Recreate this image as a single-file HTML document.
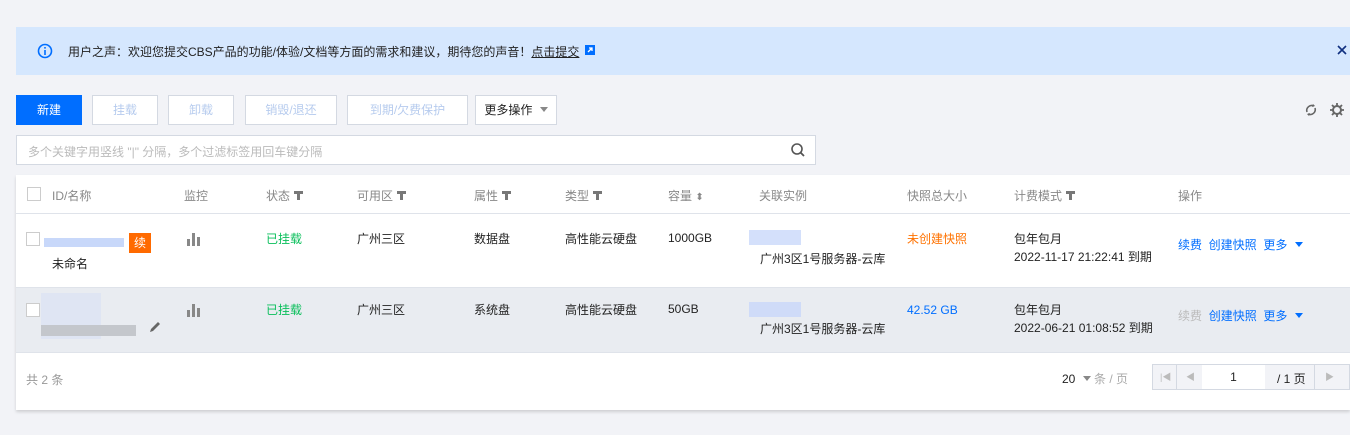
<!DOCTYPE html>
<html><head><meta charset="utf-8"><style>
*{box-sizing:border-box;margin:0;padding:0}
body{width:1350px;height:435px;background:#f2f3f7;font-family:"Liberation Sans","Noto Sans CJK SC",sans-serif;font-size:12px;color:#222;position:relative;overflow:hidden}
.a{position:absolute;white-space:nowrap}
.banner{left:16px;top:27px;width:1334px;height:48px;background:#d5e7fe}
.btn{position:absolute;top:95px;height:30px;border:1px solid #d4d9e2;background:#fff;color:#b6cbee;text-align:center;line-height:28px}
.th{color:#888;top:187px}
.cb{position:absolute;width:14px;height:14px;border:1px solid #ccc;background:#fff}
.g{color:#0abf5b}.b{color:#006eff}
.filt{display:inline-block;width:0;height:0;border-left:4px solid transparent;border-right:4px solid transparent;border-top:5px solid #777;vertical-align:2px;margin-left:4px}
.fun{display:inline-block;width:9px;height:9px;margin-left:4px;vertical-align:0;background:linear-gradient(#777,#777) center/3px 9px no-repeat,linear-gradient(#777,#777) top/9px 3px no-repeat}
.bar{position:absolute;background:#888;width:3px}
</style></head><body>
<div class="a banner"></div>
<svg class="a" style="left:37px;top:43px" width="16" height="16"><circle cx="8" cy="8" r="6.5" fill="none" stroke="#006eff" stroke-width="1.6"/><rect x="7.2" y="7" width="1.6" height="5" fill="#006eff"/><rect x="7.2" y="4" width="1.6" height="1.6" fill="#006eff"/></svg>
<div class="a" style="left:68px;top:43px;color:#222">用户之声：欢迎您提交CBS产品的功能/体验/文档等方面的需求和建议，期待您的声音！<span style="text-decoration:underline">点击提交</span></div>
<svg class="a" style="left:585px;top:45px" width="10" height="10"><rect x="0" y="0" width="10" height="10" fill="#006eff"/><path d="M3 7L7 3M4 3h3v3" stroke="#fff" stroke-width="1.3" fill="none"/></svg>
<svg class="a" style="left:1337px;top:45px" width="10" height="10"><path d="M1 1l8 8M9 1l-8 8" stroke="#103080" stroke-width="1.6"/></svg>
<div class="btn" style="left:16px;width:66px;background:#006eff;border-color:#006eff;color:#fff">新建</div>
<div class="btn" style="left:92px;width:66px">挂载</div>
<div class="btn" style="left:168px;width:66px">卸载</div>
<div class="btn" style="left:245px;width:92px">销毁/退还</div>
<div class="btn" style="left:347px;width:121px">到期/欠费保护</div>
<div class="btn" style="left:475px;width:82px;color:#222">更多操作 <span class="filt" style="border-top-color:#888"></span></div>
<svg class="a" style="left:1303px;top:102px" width="16" height="16"><path d="M4 10A5 5 0 0 1 11 4M12 6A5 5 0 0 1 5 12" stroke="#666" stroke-width="1.6" fill="none"/><path d="M10 2l2 2-3 1zM6 14l-2-2 3-1z" fill="#666"/></svg>
<svg class="a" style="left:1329px;top:102px" width="16" height="16"><circle cx="8" cy="8" r="4" fill="none" stroke="#666" stroke-width="2"/><path d="M8 1v3M8 12v3M1 8h3M12 8h3M3 3l2 2M11 11l2 2M13 3l-2 2M3 13l2-2" stroke="#666" stroke-width="1.8"/></svg>
<div class="a" style="left:16px;top:135px;width:800px;height:30px;background:#fff;border:1px solid #d4d9e2"></div>
<div class="a" style="left:28px;top:143px;color:#bbb">多个关键字用竖线 "|" 分隔，多个过滤标签用回车键分隔</div>
<svg class="a" style="left:790px;top:142px" width="16" height="16"><circle cx="7" cy="7" r="5" fill="none" stroke="#555" stroke-width="1.6"/><path d="M10.5 10.5l3.5 3.5" stroke="#555" stroke-width="1.8"/></svg>
<div class="a" style="left:16px;top:175px;width:1334px;height:235px;background:#fff;box-shadow:0 2px 3px rgba(0,0,0,.15)"></div>
<div class="a" style="left:16px;top:213px;width:1334px;height:1px;background:#dfe3ea"></div>
<div class="a" style="left:16px;top:287px;width:1334px;height:66px;background:#e9ecf1;border-top:1px solid #dfe3ea;border-bottom:1px solid #dfe3ea"></div>
<div class="cb" style="left:27px;top:187px"></div>
<div class="a th" style="left:52px">ID/名称</div>
<div class="a th" style="left:184px">监控</div>
<div class="a th" style="left:266px">状态<span class="fun"></span></div>
<div class="a th" style="left:357px">可用区<span class="fun"></span></div>
<div class="a th" style="left:474px">属性<span class="fun"></span></div>
<div class="a th" style="left:565px">类型<span class="fun"></span></div>
<div class="a th" style="left:668px">容量 <span style="font-size:10px">⬍</span></div>
<div class="a th" style="left:759px">关联实例</div>
<div class="a th" style="left:907px">快照总大小</div>
<div class="a th" style="left:1014px">计费模式<span class="fun"></span></div>
<div class="a th" style="left:1178px">操作</div>
<!-- row1 -->
<div class="cb" style="left:26px;top:232px"></div>
<div class="a" style="left:44px;top:238px;width:80px;height:9px;background:#c8d8fa"></div>
<div class="a" style="left:129px;top:233px;width:22px;height:20px;background:#ff6a00;color:#fff;text-align:center;line-height:20px">续</div>
<div class="a" style="left:52px;top:255px">未命名</div>
<div class="bar" style="left:187px;top:239px;height:7px"></div><div class="bar" style="left:192px;top:233px;height:13px"></div><div class="bar" style="left:197px;top:237px;height:9px"></div>
<div class="a g" style="left:266px;top:230px">已挂载</div>
<div class="a" style="left:357px;top:230px">广州三区</div>
<div class="a" style="left:474px;top:230px">数据盘</div>
<div class="a" style="left:565px;top:230px">高性能云硬盘</div>
<div class="a" style="left:668px;top:231px">1000GB</div>
<div class="a" style="left:749px;top:230px;width:52px;height:15px;background:#d4e0fb"></div>
<div class="a" style="left:760px;top:250px">广州3区1号服务器-云库</div>
<div class="a" style="left:907px;top:230px;color:#ff7200">未创建快照</div>
<div class="a" style="left:1014px;top:230px">包年包月</div>
<div class="a" style="left:1014px;top:248px">2022-11-17 21:22:41 到期</div>
<div class="a b" style="left:1178px;top:236px">续费&nbsp;&nbsp;创建快照&nbsp;&nbsp;更多 <span class="filt" style="border-top-color:#006eff"></span></div>
<!-- row2 -->
<div class="cb" style="left:26px;top:303px"></div>
<div class="a" style="left:41px;top:293px;width:60px;height:46px;background:#dfe5f3"></div>
<div class="a" style="left:41px;top:325px;width:95px;height:11px;background:#c4c7cc"></div>
<svg class="a" style="left:148px;top:320px" width="14" height="14"><path d="M2 12l1-3 7-7 2 2-7 7z" fill="#666"/></svg>
<div class="bar" style="left:187px;top:310px;height:7px"></div><div class="bar" style="left:192px;top:304px;height:13px"></div><div class="bar" style="left:197px;top:308px;height:9px"></div>
<div class="a g" style="left:266px;top:301px">已挂载</div>
<div class="a" style="left:357px;top:301px">广州三区</div>
<div class="a" style="left:474px;top:301px">系统盘</div>
<div class="a" style="left:565px;top:301px">高性能云硬盘</div>
<div class="a" style="left:668px;top:302px">50GB</div>
<div class="a" style="left:749px;top:302px;width:52px;height:15px;background:#cfdbf8"></div>
<div class="a" style="left:760px;top:320px">广州3区1号服务器-云库</div>
<div class="a b" style="left:907px;top:303px">42.52 GB</div>
<div class="a" style="left:1014px;top:301px">包年包月</div>
<div class="a" style="left:1014px;top:319px">2022-06-21 01:08:52 到期</div>
<div class="a" style="left:1178px;top:307px"><span style="color:#bbb">续费</span>&nbsp;&nbsp;<span class="b">创建快照&nbsp;&nbsp;更多 <span class="filt" style="border-top-color:#006eff"></span></span></div>
<!-- footer -->
<div class="a" style="left:26px;top:371px;color:#999">共 2 条</div>
<div class="a" style="left:1062px;top:370px">20 <span class="filt" style="border-top-color:#888"></span> <span style="color:#aaa">条 / 页</span></div>
<div class="a" style="left:1152px;top:364px;width:198px;height:26px;border:1px solid #d4d9e2;background:#f2f3f7"></div>
<div class="a" style="left:1202px;top:365px;width:63px;height:24px;background:#fff;text-align:center;line-height:24px">1</div>
<div class="a" style="left:1277px;top:370px">/ 1 页</div>
<div class="a" style="left:1176px;top:365px;width:1px;height:24px;background:#d4d9e2"></div>
<div class="a" style="left:1314px;top:365px;width:1px;height:24px;background:#d4d9e2"></div>
<div class="a" style="left:1160px;top:370px;color:#bbb;font-size:9px">|◀</div>
<div class="a" style="left:1186px;top:370px;color:#bbb;font-size:9px">◀</div>
<div class="a" style="left:1325px;top:370px;color:#bbb;font-size:9px">▶</div>
</body></html>
